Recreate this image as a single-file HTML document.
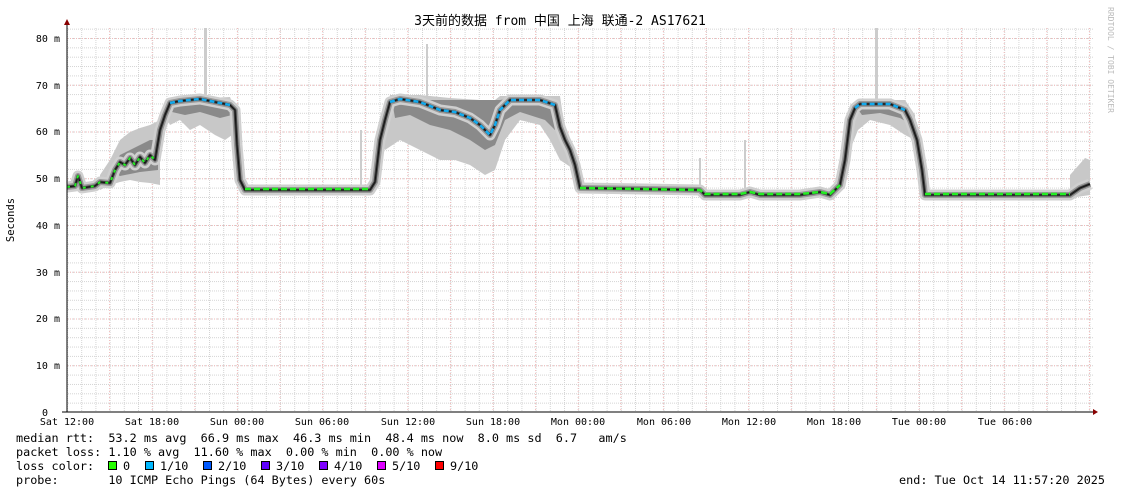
<!DOCTYPE html>
<html><head><meta charset="utf-8"><style>
html,body{margin:0;padding:0;background:#fff;width:1121px;height:494px;overflow:hidden}
svg text{font-family:"DejaVu Sans Mono","Liberation Mono","Noto Sans CJK SC",monospace;font-size:11.8px;fill:#000}
polyline{fill:none;stroke-linejoin:round}
</style></head><body>
<svg width="1121" height="494" xmlns="http://www.w3.org/2000/svg">
<defs>
<pattern id="vg" x="67" y="0" width="14.2" height="494" patternUnits="userSpaceOnUse"><line x1="0.5" y1="0" x2="0.5" y2="494" stroke="#d4d4d4" stroke-dasharray="1,1"/></pattern>
<pattern id="hg" x="0" y="412" width="1121" height="9.35" patternUnits="userSpaceOnUse"><line x1="0" y1="0.5" x2="1121" y2="0.5" stroke="#d4d4d4" stroke-dasharray="1,1"/></pattern>
</defs>
<rect x="67" y="28" width="1026" height="384" fill="url(#vg)"/>
<rect x="67" y="28" width="1026" height="384" fill="url(#hg)"/>
<g stroke="#f2b8b8" stroke-dasharray="1,2">
<line x1="109.6" y1="28" x2="109.6" y2="412"/><line x1="152.2" y1="28" x2="152.2" y2="412"/><line x1="194.8" y1="28" x2="194.8" y2="412"/><line x1="237.4" y1="28" x2="237.4" y2="412"/><line x1="280" y1="28" x2="280" y2="412"/><line x1="322.6" y1="28" x2="322.6" y2="412"/><line x1="365.2" y1="28" x2="365.2" y2="412"/><line x1="407.8" y1="28" x2="407.8" y2="412"/><line x1="450.4" y1="28" x2="450.4" y2="412"/><line x1="493" y1="28" x2="493" y2="412"/><line x1="535.6" y1="28" x2="535.6" y2="412"/><line x1="578.2" y1="28" x2="578.2" y2="412"/><line x1="620.8" y1="28" x2="620.8" y2="412"/><line x1="663.4" y1="28" x2="663.4" y2="412"/><line x1="706" y1="28" x2="706" y2="412"/><line x1="748.6" y1="28" x2="748.6" y2="412"/><line x1="791.2" y1="28" x2="791.2" y2="412"/><line x1="833.8" y1="28" x2="833.8" y2="412"/><line x1="876.4" y1="28" x2="876.4" y2="412"/><line x1="919" y1="28" x2="919" y2="412"/><line x1="961.6" y1="28" x2="961.6" y2="412"/><line x1="1004.2" y1="28" x2="1004.2" y2="412"/><line x1="1046.8" y1="28" x2="1046.8" y2="412"/><line x1="1089.4" y1="28" x2="1089.4" y2="412"/>
<line x1="67" y1="38.5" x2="1093" y2="38.5"/><line x1="67" y1="85.2" x2="1093" y2="85.2"/><line x1="67" y1="132" x2="1093" y2="132"/><line x1="67" y1="178.7" x2="1093" y2="178.7"/><line x1="67" y1="225.5" x2="1093" y2="225.5"/><line x1="67" y1="272.2" x2="1093" y2="272.2"/><line x1="67" y1="319" x2="1093" y2="319"/><line x1="67" y1="365.7" x2="1093" y2="365.7"/>
</g>
<g fill="#ccc"><rect x="204" y="28" width="3" height="80"/><rect x="360" y="130" width="2" height="60"/><rect x="426" y="44" width="2" height="60"/><rect x="699" y="158" width="2" height="34"/><rect x="744" y="140" width="2" height="54"/><rect x="875" y="28" width="3" height="78"/></g>
<g fill="#c8c8c8">
<polygon points="100,175 110,160 120,140 130,132 140,128 150,125 160,120 160,185 150,183 140,182 130,180 120,182 110,185 100,190"/>
<polygon points="165,115 170,100 230,97 235,110 232,135 225,140 215,135 200,125 190,130 180,120 170,125"/>
<polygon points="380,140 390,95 420,95 450,98 480,100 495,100 500,96 560,96 565,130 575,170 560,160 550,140 540,125 520,120 505,140 495,170 485,175 470,165 455,160 440,160 420,150 400,140 385,150"/>
<polygon points="845,160 850,110 860,100 905,100 915,115 915,140 905,135 890,125 870,120 858,130 850,150"/>
<polygon points="1070,175 1085,158 1090,160 1090,195 1070,198"/>
</g>
<g fill="#8a8a8a">
<polygon points="110,170 120,155 130,150 140,145 150,140 158,140 158,170 140,172 120,176"/>
<polygon points="170,104 230,101 232,115 220,118 200,112 185,115 172,112"/>
<polygon points="392,100 500,100 510,98 556,100 560,115 555,130 545,120 520,112 505,120 495,145 485,150 470,140 450,130 430,125 410,115 395,118"/>
<polygon points="855,105 908,105 912,125 900,118 880,113 862,115"/>
</g>
<polyline stroke="#cfcfcf" stroke-width="11" points="67,187 75,186 78,176 82,188 95,186 100,182 110,183 115,170 120,162 125,165 130,158 135,165 140,157 145,163 150,155 155,160 160,130 165,115 170,103 180,101 200,99 215,102 230,105 235,110 237,145 240,180 245,190 370,190 375,182 380,140 385,120 390,102 400,99 420,102 440,110 455,112 470,118 480,125 490,135 495,125 500,110 510,100 540,100 555,105 560,127 565,140 570,150 575,165 580,188 700,190 705,195 740,195 750,192 760,195 800,195 820,192 830,195 840,185 845,160 850,120 855,108 860,104 890,104 905,110 910,120 917,140 922,170 925,195 1070,195 1080,188 1090,184"/>
<polyline stroke="#999" stroke-width="6" points="67,187 75,186 78,176 82,188 95,186 100,182 110,183 115,170 120,162 125,165 130,158 135,165 140,157 145,163 150,155 155,160 160,130 165,115 170,103 180,101 200,99 215,102 230,105 235,110 237,145 240,180 245,190 370,190 375,182 380,140 385,120 390,102 400,99 420,102 440,110 455,112 470,118 480,125 490,135 495,125 500,110 510,100 540,100 555,105 560,127 565,140 570,150 575,165 580,188 700,190 705,195 740,195 750,192 760,195 800,195 820,192 830,195 840,185 845,160 850,120 855,108 860,104 890,104 905,110 910,120 917,140 922,170 925,195 1070,195 1080,188 1090,184"/>
<polyline stroke="#444" stroke-width="3" points="67,187 75,186 78,176 82,188 95,186 100,182 110,183 115,170 120,162 125,165 130,158 135,165 140,157 145,163 150,155 155,160 160,130 165,115 170,103 180,101 200,99 215,102 230,105 235,110 237,145 240,180 245,190 370,190 375,182 380,140 385,120 390,102 400,99 420,102 440,110 455,112 470,118 480,125 490,135 495,125 500,110 510,100 540,100 555,105 560,127 565,140 570,150 575,165 580,188 700,190 705,195 740,195 750,192 760,195 800,195 820,192 830,195 840,185 845,160 850,120 855,108 860,104 890,104 905,110 910,120 917,140 922,170 925,195 1070,195 1080,188 1090,184"/>
<polyline stroke="#111" stroke-width="1" points="67,187 75,186 78,176 82,188 95,186 100,182 110,183 115,170 120,162 125,165 130,158 135,165 140,157 145,163 150,155 155,160 160,130 165,115 170,103 180,101 200,99 215,102 230,105 235,110 237,145 240,180 245,190 370,190 375,182 380,140 385,120 390,102 400,99 420,102 440,110 455,112 470,118 480,125 490,135 495,125 500,110 510,100 540,100 555,105 560,127 565,140 570,150 575,165 580,188 700,190 705,195 740,195 750,192 760,195 800,195 820,192 830,195 840,185 845,160 850,120 855,108 860,104 890,104 905,110 910,120 917,140 922,170 925,195 1070,195 1080,188 1090,184"/>
<polyline stroke="#22ee22" stroke-width="2.5" stroke-dasharray="6,3" points="245,189 370,189"/>
<polyline stroke="#22ee22" stroke-width="2.5" stroke-dasharray="6,3" points="580,188 700,190 705,194 740,194 750,192 760,194 800,194 820,192 830,194 840,185"/>
<polyline stroke="#22ee22" stroke-width="2.5" stroke-dasharray="6,3" points="925,194 1070,194"/>
<polyline stroke="#22ee22" stroke-width="2" stroke-dasharray="3,5" points="67,187 75,186 78,176 82,188 95,186 100,182 110,183 115,170 120,162 125,165 130,158 135,165 140,157 145,163 150,155 155,160"/>
<polyline stroke="#11aaee" stroke-width="2.5" stroke-dasharray="5,3" points="170,103 180,101 200,99 215,102 230,105"/>
<polyline stroke="#11aaee" stroke-width="2.5" stroke-dasharray="5,3" points="390,102 400,99 420,102 440,110 455,112 470,118 480,125 490,135 495,125 500,110 510,100 540,100 555,105"/>
<polyline stroke="#11aaee" stroke-width="2.5" stroke-dasharray="5,3" points="855,108 860,104 890,104 905,110"/>
<line x1="67" y1="412" x2="67" y2="24" stroke="#000"/>
<polygon points="64,25 70,25 67,19" fill="#800"/>
<line x1="62" y1="412" x2="1094" y2="412" stroke="#000"/>
<polygon points="1093,409 1093,415 1098,412" fill="#800"/>
<text x="560" y="25" text-anchor="middle" style="font-size:13px">3天前的数据 from 中国 上海 联通-2 AS17621</text>
<g text-anchor="end"><text x="60" y="42" style="font-size:10px">80 m</text><text x="60" y="89" style="font-size:10px">70 m</text><text x="60" y="135" style="font-size:10px">60 m</text><text x="60" y="182" style="font-size:10px">50 m</text><text x="60" y="229" style="font-size:10px">40 m</text><text x="60" y="276" style="font-size:10px">30 m</text><text x="60" y="322" style="font-size:10px">20 m</text><text x="60" y="369" style="font-size:10px">10 m</text><text x="48" y="416" style="font-size:10px">0</text></g>
<text transform="translate(14,220) rotate(-90)" text-anchor="middle" style="font-size:10.5px">Seconds</text>
<text transform="translate(1108,60) rotate(90)" text-anchor="middle" style="font-size:8px;fill:#bbb">RRDTOOL / TOBI OETIKER</text>
<g text-anchor="middle"><text x="67" y="425" style="font-size:10px">Sat 12:00</text><text x="152" y="425" style="font-size:10px">Sat 18:00</text><text x="237" y="425" style="font-size:10px">Sun 00:00</text><text x="322" y="425" style="font-size:10px">Sun 06:00</text><text x="408" y="425" style="font-size:10px">Sun 12:00</text><text x="493" y="425" style="font-size:10px">Sun 18:00</text><text x="578" y="425" style="font-size:10px">Mon 00:00</text><text x="664" y="425" style="font-size:10px">Mon 06:00</text><text x="749" y="425" style="font-size:10px">Mon 12:00</text><text x="834" y="425" style="font-size:10px">Mon 18:00</text><text x="919" y="425" style="font-size:10px">Tue 00:00</text><text x="1005" y="425" style="font-size:10px">Tue 06:00</text></g>
<text x="16" y="442" xml:space="preserve">median rtt:  53.2 ms avg  66.9 ms max  46.3 ms min  48.4 ms now  8.0 ms sd  6.7   am/s</text>
<text x="16" y="456" xml:space="preserve">packet loss: 1.10 % avg  11.60 % max  0.00 % min  0.00 % now</text>
<text x="16" y="470" xml:space="preserve">loss color:</text>
<g stroke="#000"><rect x="108.5" y="461.5" width="8" height="8" fill="#26ff00"/><rect x="145.5" y="461.5" width="8" height="8" fill="#00b8ff"/><rect x="203.5" y="461.5" width="8" height="8" fill="#0059ff"/><rect x="261.5" y="461.5" width="8" height="8" fill="#5e00ff"/><rect x="319.5" y="461.5" width="8" height="8" fill="#7e00ff"/><rect x="377.5" y="461.5" width="8" height="8" fill="#dd00ff"/><rect x="435.5" y="461.5" width="8" height="8" fill="#ff0000"/></g>
<text x="123" y="470">0</text><text x="160" y="470">1/10</text><text x="218" y="470">2/10</text><text x="276" y="470">3/10</text><text x="334" y="470">4/10</text><text x="392" y="470">5/10</text><text x="450" y="470">9/10</text>
<text x="16" y="484" xml:space="preserve">probe:       10 ICMP Echo Pings (64 Bytes) every 60s</text>
<text x="1105" y="484" text-anchor="end">end: Tue Oct 14 11:57:20 2025</text>
</svg>
</body></html>
